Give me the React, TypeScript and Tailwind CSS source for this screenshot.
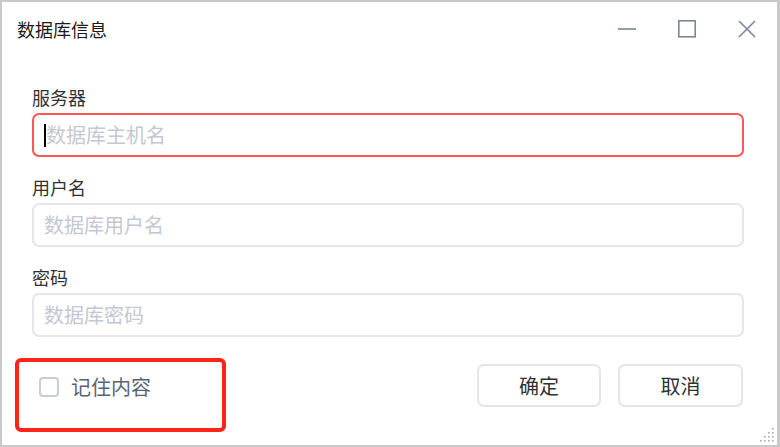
import React from 'react';

const font = { fontFamily: '"Noto Sans CJK SC", "Noto Sans", sans-serif' };

function Field({ label, placeholder, active }: { label: string; placeholder: string; active?: boolean }) {
  return (
    <div className="flex flex-col">
      <div className="h-[24px] text-[18px] leading-[24px] text-[#303133]">{label}</div>
      <div
        className={
          active
            ? 'mt-[4px] flex h-[44px] w-[712px] items-center rounded-[7px] border-2 border-[#ff5555] pl-[10px]'
            : 'mt-[4px] flex h-[44px] w-[712px] items-center rounded-[7px] border-2 border-[#e4e6eb] pl-[10px]'
        }
      >
        {active && <span className="h-[23px] w-[2px] bg-black" />}
        <span className="text-[20px] leading-[28px] text-[#c4c8d2]">{placeholder}</span>
      </div>
    </div>
  );
}

function ResizeGrip() {
  const dots: [number, number][] = [];
  for (let r = 0; r < 4; r++) {
    for (let c = 3 - r; c < 4; c++) dots.push([c * 4 + 2, r * 4 + 2]);
  }
  return (
    <svg width="16" height="16" viewBox="0 0 16 16" className="absolute bottom-[2px] right-[2px]">
      {dots.map(([x, y], i) => (
        <rect key={i} x={x - 1} y={y - 1} width="1.6" height="1.6" fill="#a7adb8" />
      ))}
    </svg>
  );
}

export default function App() {
  return (
    <div
      style={font}
      className="relative flex h-[447px] w-[780px] flex-col border-t-2 border-r-[3px] border-b-2 border-l-2 border-[#c9c9c9] bg-white"
    >
      {/* Title bar */}
      <div className="flex h-[54px] items-center">
        <div className="pl-[15px] text-[18px] leading-[24px] text-[#1b1b1b]">数据库信息</div>
        <div className="ml-auto flex h-full">
          <button className="flex w-[60px] items-center justify-center">
            <svg width="20" height="20" viewBox="0 0 20 20">
              <path d="M1 10H19" stroke="#7b869a" strokeWidth="1.6" fill="none" />
            </svg>
          </button>
          <button className="flex w-[60px] items-center justify-center">
            <svg width="20" height="20" viewBox="0 0 20 20">
              <rect x="1.8" y="1.8" width="16.4" height="16" stroke="#7b869a" strokeWidth="1.6" fill="none" />
            </svg>
          </button>
          <button className="flex w-[60px] items-center justify-center">
            <svg width="20" height="20" viewBox="0 0 20 20">
              <path d="M2 2L18 18M18 2L2 18" stroke="#7b869a" strokeWidth="1.6" fill="none" />
            </svg>
          </button>
        </div>
      </div>

      {/* Form */}
      <div className="mt-[29px] flex flex-col gap-[18px] pl-[30px]">
        <Field label="服务器" placeholder="数据库主机名" active />
        <Field label="用户名" placeholder="数据库用户名" />
        <Field label="密码" placeholder="数据库密码" />
      </div>

      {/* Footer */}
      <div className="mt-[21px] flex items-start">
        <div className="ml-[13px] h-[74px] w-[211px] rounded-[6px] border-4 border-[#ff2418] pl-[20px] pt-[13px]">
          <label className="flex h-[24px] items-center gap-[12px]">
            <span className="h-[20px] w-[20px] rounded-[4px] border-2 border-[#c9cdd4] bg-white" />
            <span className="text-[20px] leading-[24px] text-[#5b6372]">记住内容</span>
          </label>
        </div>
        <div className="mr-[34px] ml-auto mt-[6px] flex gap-[17px]">
          <button className="h-[43px] w-[124px] rounded-[7px] border-2 border-[#e3e5ea] text-[20px] text-[#303133]">
            确定
          </button>
          <button className="h-[43px] w-[125px] rounded-[7px] border-2 border-[#e3e5ea] text-[20px] text-[#303133]">
            取消
          </button>
        </div>
      </div>

      <ResizeGrip />
    </div>
  );
}
